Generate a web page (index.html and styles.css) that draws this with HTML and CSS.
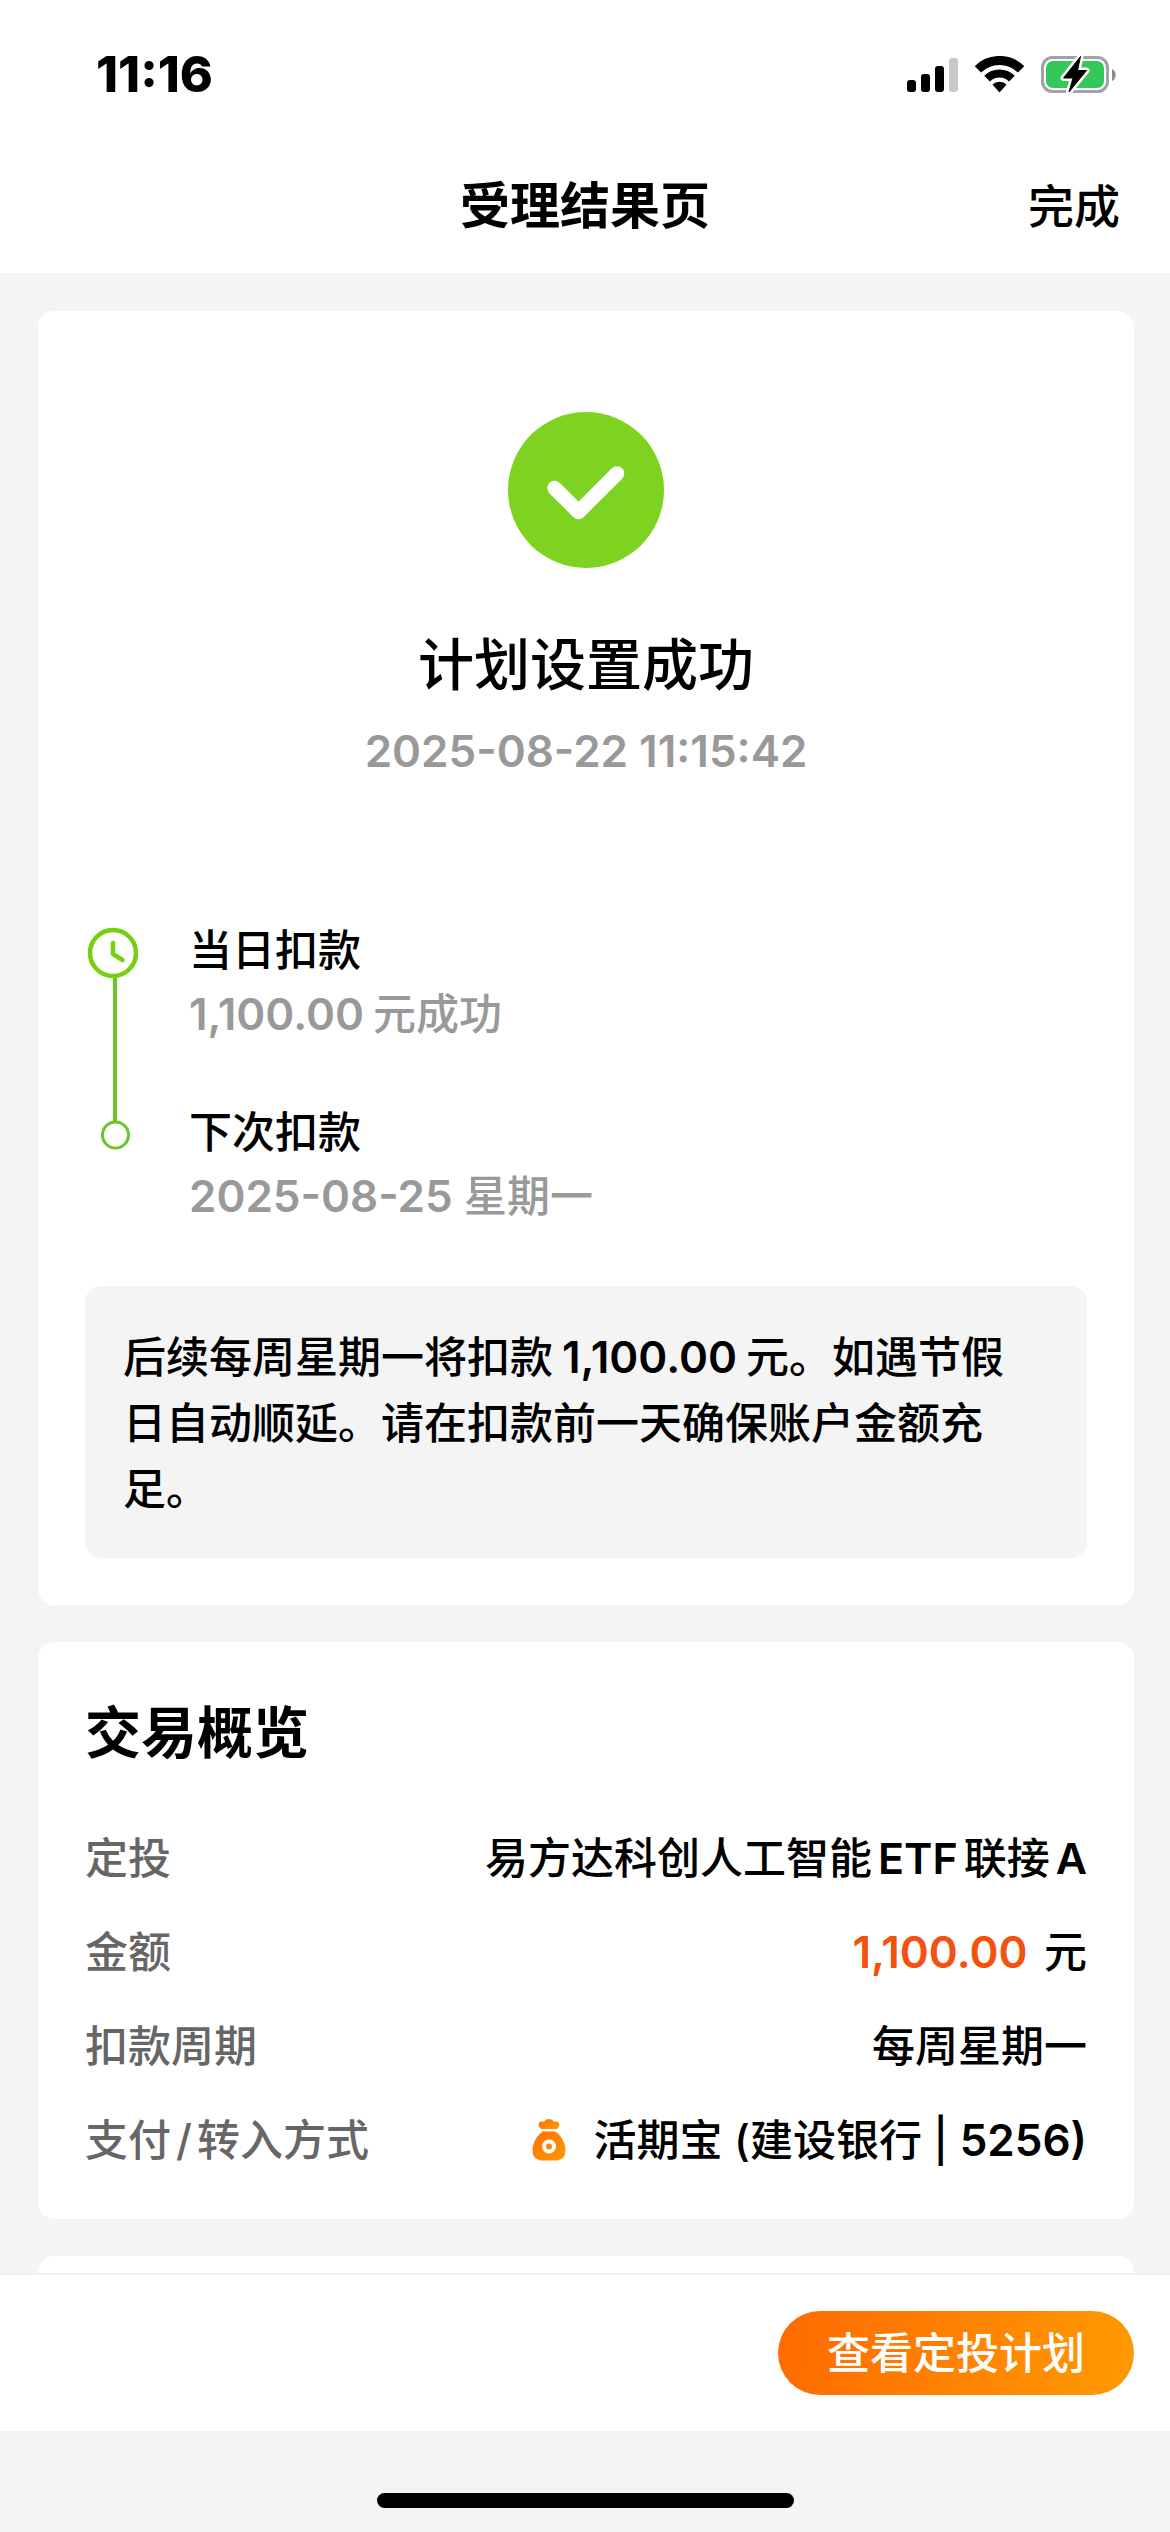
FILE: index.html
```html
<!DOCTYPE html>
<html lang="zh-CN">
<head>
<meta charset="utf-8">
<meta name="viewport" content="width=device-width, initial-scale=1">
<title>受理结果页</title>
<link rel="stylesheet" href="styles.css">
</head>
<body>
<div class="screen">
  <header class="top">
    <div class="status">
      <span class="status-time">11:16</span>
      <div class="status-icons">
        <svg width="51" height="37" viewBox="0 0 51 37" aria-hidden="true">
          <rect x="0" y="24" width="9" height="12" rx="3"/>
          <rect x="14" y="18" width="9" height="18" rx="3"/>
          <rect x="28" y="10" width="9" height="26" rx="3"/>
          <rect x="42" y="2" width="9" height="34" rx="3" fill="#c8c8c8"/>
        </svg>
        <svg width="49" height="37" viewBox="0 0 49 37" aria-hidden="true">
          <path d="M2.9 13.4A30.5 30.5 0 0 1 46.1 13.4" fill="none" stroke="#000" stroke-width="9"/>
          <path d="M12.1 22.6A17.5 17.5 0 0 1 36.9 22.6" fill="none" stroke="#000" stroke-width="8"/>
          <path d="M17.4 28.6A10 10 0 0 1 31.6 28.6L24.5 36.4Z"/>
        </svg>
        <svg width="75" height="37" viewBox="0 0 75 37" aria-hidden="true">
          <rect x="1.5" y="1.5" width="65" height="34" rx="10" fill="none" stroke="#a3a1a3" stroke-width="3"/>
          <rect x="5" y="5" width="58" height="27" rx="7" fill="#34c759"/>
          <path d="M71 13C76 15 76 23 71 25Z" fill="#8e8e8e"/>
          <path d="M39.500 .5L22.500 22H32L28 36L45.500 14.500H36.500Z" stroke="#fff" stroke-width="6" stroke-linejoin="round"/>
          <path d="M39.500 .5L22.500 22H32L28 36L45.500 14.500H36.500Z" stroke="#000" stroke-width="1" stroke-linejoin="round"/>
        </svg>
      </div>
    </div>
    <div class="nav">
      <h1 class="nav-title">受理结果页</h1>
      <button class="nav-done" type="button">完成</button>
    </div>
  </header>

  <main class="content">
    <section class="card">
      <div class="result">
        <svg class="result-icon" width="156" height="156" viewBox="0 0 156 156" aria-hidden="true">
          <circle cx="78" cy="78" r="78" fill="#7ed321"/>
          <path d="M46.500 76L70.500 100L109 61.500" fill="none" stroke="#fff" stroke-width="14.500" stroke-linecap="round" stroke-linejoin="round"/>
        </svg>
        <h2 class="result-title">计划设置成功</h2>
        <time class="result-time" datetime="2025-08-22T11:15:42">2025-08-22 11:15:42</time>
      </div>
      <div class="timeline">
        <svg class="timeline-rail" width="50" height="224" viewBox="0 0 50 224" aria-hidden="true">
          <path d="M27 50V194" stroke="#6cc427" stroke-width="4"/>
          <circle cx="25" cy="26" r="23" fill="none" stroke="#75d011" stroke-width="4.500"/>
          <path d="M25 16V27L34.500 33" fill="none" stroke="#75d011" stroke-width="4.500" stroke-linecap="round" stroke-linejoin="round"/>
          <circle cx="27.500" cy="208" r="13" fill="#fff" stroke="#6cc427" stroke-width="3"/>
        </svg>
        <ol class="steps">
          <li class="step">
            <span>当日扣款</span>
            <span class="step-note"><span class="num">1,100.00</span>元成功</span>
          </li>
          <li class="step">
            <span>下次扣款</span>
            <span class="step-note"><span class="date">2025-08-25</span> 星期一</span>
          </li>
        </ol>
      </div>
      <p class="notice">后续每周星期一将扣款<span class="num">1,100.00</span>元。如遇节假日自动顺延。请在扣款前一天确保账户金额充足。</p>
    </section>

    <section class="card overview">
      <h2 class="overview-title">交易概览</h2>
      <dl class="rows">
        <div class="row"><dt>定投</dt><dd>易方达科创人工智能<span class="latin">ETF</span>联接<span class="latin latin-end">A</span></dd></div>
        <div class="row"><dt>金额</dt><dd><span class="amount">1,100.00</span> 元</dd></div>
        <div class="row"><dt>扣款周期</dt><dd>每周星期一</dd></div>
        <div class="row">
          <dt>支付<span class="slash">/</span>转入方式</dt>
          <dd class="pay">
            <svg width="34" height="42" viewBox="0 0 34 42" aria-hidden="true">
              <defs><linearGradient id="bag" x1="0" y1="0" x2="1" y2="1"><stop offset="0" stop-color="#ff6f00"/><stop offset="1" stop-color="#ff9a00"/></linearGradient></defs>
              <path d="M9 10C5 7 6 1 12 3C14-1 20-1 22 3C28 1 29 7 25 10Z" fill="url(#bag)"/>
              <path d="M11 12.500H23C29 16 34 25 33.500 32C33 39 29 41.500 23 41.500H11C5 41.500 1 39 .5 32C0 25 5 16 11 12.500Z" fill="url(#bag)"/>
              <circle cx="17" cy="27.500" r="5" fill="none" stroke="#fff" stroke-width="4"/>
            </svg>
            <span>活期宝 (建设银行 | <span class="tail">5256)</span></span>
          </dd>
        </div>
      </dl>
    </section>

    <section class="card card-next"></section>
  </main>

  <footer class="actions">
    <button class="primary" type="button">查看定投计划</button>
  </footer>
  <div class="home"><span class="home-bar"></span></div>
</div>
</body>
</html>
```
FILE: styles.css
```css
* {
  box-sizing: border-box;
  margin: 0;
  padding: 0;
}

body {
  background: #f4f4f4;
  color: #000;
  font-family: Inter, "Noto Sans CJK SC", sans-serif;
  font-size: 43px;
  font-weight: 500;
  line-height: 64px;
}

button {
  border: 0;
  background: none;
  color: inherit;
  font: inherit;
  cursor: pointer;
}

svg {
  display: block;
  flex: none;
}

.screen {
  display: flex;
  flex-direction: column;
  height: 100vh;
}

/* Status bar and navigation */
.top {
  background: #fff;
}

.status {
  display: flex;
  align-items: center;
  justify-content: space-between;
  padding: 42px 54px 32px 96px;
}

.status-time {
  font-size: 50px;
  font-weight: 800;
}

.status-icons {
  display: flex;
  gap: 17px;
}

.nav {
  display: grid;
  grid-template-columns: 1fr auto 1fr;
  align-items: center;
  padding: 32px 50px;
  height: 135px;
}

.nav-title {
  grid-column: 2;
  font-size: 50px;
  font-weight: 700;
}

.nav-done {
  justify-self: end;
  font-size: 46px;
}

/* Cards */
.content {
  flex: 1;
  min-height: 0;
  display: flex;
  flex-direction: column;
  gap: 37px;
  padding: 38px 36px 0 38px;
  overflow-y: auto;
  scrollbar-width: none;
}

.card {
  flex: none;
  padding: 47px;
  border-radius: 16px;
  background: #fff;
}

.card-next {
  height: 120px;
}

.result {
  display: flex;
  flex-direction: column;
  align-items: center;
  padding-top: 54px;
}

.result-title {
  margin-top: 57px;
  font-size: 56px;
  font-weight: 500;
  line-height: 80px;
}

.result-time {
  margin-top: 14px;
  color: #999;
  font-size: 44px;
  font-weight: 600;
}

.timeline {
  display: flex;
  gap: 51px;
  margin-top: 135px;
  padding-left: 3px;
}

.timeline-rail {
  margin-top: 9px;
}

.steps {
  display: flex;
  flex-direction: column;
  gap: 54px;
  list-style: none;
}

.step {
  display: flex;
  flex-direction: column;
}

.step-note {
  color: #999;
}

.num,
.date,
.amount {
  font-size: 44px;
  font-weight: 600;
  line-height: 1;
}

.num {
  margin: 0 9px;
}

.step-note .num {
  margin-left: 0;
}

.notice {
  margin-top: 58px;
  padding: 38px 62px 36px 38px;
  border-radius: 16px;
  background: #f4f4f4;
  line-height: 66px;
}

/* Overview list */
.overview {
  padding-top: 51px;
  padding-bottom: 32px;
}

.overview-title {
  font-size: 56px;
  font-weight: 700;
  line-height: 80px;
}

.rows {
  margin-top: 38px;
}

.row {
  display: flex;
  align-items: center;
  justify-content: space-between;
  height: 94px;
}

dt {
  color: #666;
}

.slash {
  margin: 0 5px;
}

.latin {
  margin: 0 6px;
  font-weight: 600;
}

.latin-end {
  margin-right: 0;
}

.amount {
  margin-right: 5px;
  color: #f5500d;
}

.pay {
  display: flex;
  align-items: center;
  gap: 28px;
}

.tail {
  font-size: 44px;
  font-weight: 600;
  line-height: 1;
}

/* Bottom bar */
.actions {
  display: flex;
  justify-content: flex-end;
  padding: 36px 36px 36px 38px;
  border-top: 2px solid #f0f0f0;
  background: #fff;
}

.primary {
  height: 84px;
  padding: 0 49px;
  border-radius: 42px;
  background: linear-gradient(100deg, #ff6a00, #ff9a00);
  color: #fff;
}

.home {
  display: flex;
  justify-content: center;
  padding: 62px 0 24px;
}

.home-bar {
  width: 417px;
  height: 15px;
  border-radius: 8px;
  background: #000;
}
```
